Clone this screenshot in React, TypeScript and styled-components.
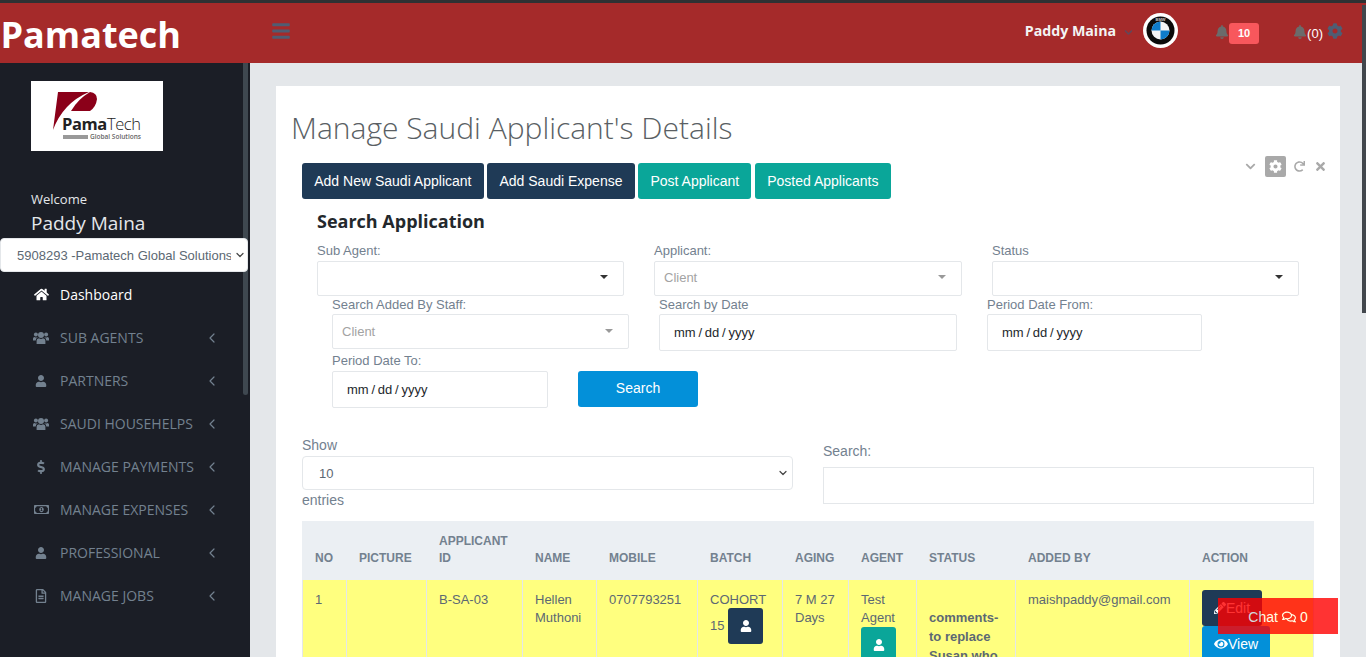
import React from 'react';
import styled, { createGlobalStyle } from 'styled-components';
import {
  FaBars,
  FaBell,
  FaChevronDown,
  FaCog,
  FaDollarSign,
  FaEye,
  FaHome,
  FaPencilAlt,
  FaRedo,
  FaRegComments,
  FaRegFileAlt,
  FaRegMoneyBillAlt,
  FaTimes,
  FaUser,
} from 'react-icons/fa';
import { ChevronDown, ChevronLeft } from 'lucide-react';

const GlobalStyle = createGlobalStyle`
  html, body {
    margin: 0;
    height: 100%;
    overflow: hidden;
  }
  body {
    font-family: "Liberation Sans", Arial, sans-serif;
    font-size: 13px;
    color: #73818f;
    background: #e4e7ea;
  }
  * {
    box-sizing: border-box;
  }
`;

const Page = styled.div`
  display: flex;
  flex-direction: column;
  height: 100vh;
  overflow: hidden;
  border-top: 3px solid #2f3133;
`;

const Header = styled.header`
  flex: none;
  height: 60px;
  display: flex;
  align-items: center;
  background: #a52a2a;
  padding-right: 23px;
`;

const Brand = styled.div`
  width: 250px;
  height: 60px;
  padding-left: 0.5px;
  font-family: "Open Sans", sans-serif;
  font-weight: 700;
  font-size: 36px;
  line-height: 64px;
  color: #fff;
`;

const MenuToggle = styled.div`
  display: flex;
  margin: 0 0 4px 21px;
  color: #4f5d73;
  font-size: 20px;
`;

const HeaderRight = styled.div`
  display: flex;
  align-items: center;
  margin-left: auto;
`;

const UserName = styled.span`
  margin-bottom: 5px;
  font-family: "Open Sans", sans-serif;
  font-weight: 700;
  font-size: 14.2px;
  color: #f3f3f3;
`;

const UserCaret = styled.span`
  display: flex;
  margin: 0 10px 2px 8px;
  color: #5f4a5c;
  font-size: 9px;
`;

const Avatar = styled.span`
  display: flex;
  margin-bottom: 5px;
`;

const Bell = styled.span<{ $gap: number }>`
  display: flex;
  margin: 0 0 2px ${(p) => p.$gap}px;
  color: #6b6b6b;
  font-size: 14px;
`;

const Badge = styled.span`
  width: 30px;
  height: 21px;
  margin-top: 1px;
  border-radius: 3px;
  background: #f8575c;
  color: #fff;
  font-size: 11px;
  font-weight: 700;
  line-height: 21px;
  text-align: center;
`;

const ZeroCount = styled.span`
  margin-right: 4px;
  font-size: 13px;
  color: #fff;
`;

const HeaderGear = styled.span`
  display: flex;
  margin-bottom: 4px;
  color: #4f5d73;
  font-size: 16px;
`;

const Body = styled.div`
  flex: 1;
  display: flex;
  min-height: 0;
`;

const Sidebar = styled.aside`
  position: relative;
  flex: 0 0 250px;
  background: #1b1e26;
  font-family: "Open Sans", sans-serif;
`;

const SideThumb = styled.div`
  position: absolute;
  top: 0;
  right: 2px;
  width: 5px;
  height: 332px;
  border-radius: 0 0 3px 3px;
  background: #3f4850;
`;

const LogoBox = styled.div`
  width: 132px;
  height: 70px;
  margin: 18px 0 0 31px;
  background: #fff;
`;

const Welcome = styled.div`
  margin: 39px 0 0 31px;
  font-size: 13px;
  line-height: 18px;
  color: #e4e7ea;
`;

const SideUser = styled.div`
  margin: 2px 0 0 31px;
  font-size: 19px;
  line-height: 26px;
  color: #e4e7ea;
`;

const SelectWrap = styled.div<{ $width: string }>`
  position: relative;
  width: ${(p) => p.$width};
`;

const SelectCaret = styled.span<{ $right: number }>`
  position: absolute;
  top: 50%;
  right: ${(p) => p.$right}px;
  display: flex;
  transform: translateY(-50%);
  color: #444;
  pointer-events: none;
`;

const CompanySelect = styled.select`
  display: block;
  appearance: none;
  width: 100%;
  height: 34px;
  margin-top: 2px;
  padding: 0 16px 0 16px;
  border: 1px solid #e4e7ea;
  border-radius: 4px;
  background: #fff;
  font-family: "Liberation Sans", Arial, sans-serif;
  font-size: 13px;
  color: #5c6873;
`;

const Menu = styled.nav`
  display: flex;
  flex-direction: column;
  margin-top: 1px;
`;

const MenuItem = styled.div<{ $active?: boolean }>`
  display: flex;
  align-items: center;
  height: 43px;
  padding-left: 33px;
  font-size: 14px;
  color: ${(p) => (p.$active ? '#fff' : '#73818f')};
`;

const MenuIcon = styled.span<{ $size?: number }>`
  display: flex;
  justify-content: center;
  width: 16px;
  margin-right: 11px;
  font-size: ${(p) => p.$size ?? 15}px;
`;

const MenuLabel = styled.span`
  flex: 1;
  white-space: nowrap;
`;

const MenuArrow = styled.span`
  display: flex;
  margin-right: 30px;
`;

const Main = styled.main`
  position: relative;
  flex: 1;
  min-width: 0;
  padding: 23px 26px 0;
  overflow: hidden;
`;

const PageThumb = styled.div`
  position: fixed;
  top: 5px;
  right: 0;
  width: 4px;
  height: 308px;
  background: #42474d;
`;

const Card = styled.section`
  background: #fff;
  padding: 24px 26px 40px 15px;
`;

const Title = styled.h1`
  margin: 0 0 17px;
  font-family: "Open Sans", sans-serif;
  font-weight: 300;
  font-size: 30px;
  line-height: 36px;
  color: #5a5f64;
`;

const Inner = styled.div`
  padding-left: 11px;
`;

const ActionRow = styled.div`
  display: flex;
  align-items: flex-start;
  gap: 3.5px;
`;

const Btn = styled.button<{ $tone: 'navy' | 'teal' | 'blue' }>`
  height: 36px;
  padding: 0 12.25px;
  border: 0;
  border-radius: 3px;
  background: ${(p) =>
    p.$tone === 'navy' ? '#1f3a56' : p.$tone === 'teal' ? '#0aa699' : '#0390d9'};
  color: #fff;
  font-family: "Liberation Sans", Arial, sans-serif;
  font-size: 14px;
  white-space: nowrap;
`;

const Tools = styled.div`
  display: flex;
  align-items: center;
  margin: -7px -13px 0 auto;
  color: #a9a9a9;
  font-size: 11px;
`;

const ToolGear = styled.span`
  display: flex;
  align-items: center;
  justify-content: center;
  width: 21px;
  height: 21px;
  margin: 0 8px 0 9px;
  border-radius: 2px;
  background: #a9a9a9;
  color: #fff;
  font-size: 13px;
`;

const ToolIcon = styled.span<{ $size?: number }>`
  display: flex;
  margin-right: 9px;
  font-size: ${(p) => p.$size ?? 11}px;
  &:last-child {
    margin-right: 0;
  }
`;

const SearchTitle = styled.h2`
  margin: 10px 0 9px 15px;
  font-family: "Open Sans", sans-serif;
  font-weight: 700;
  font-size: 18px;
  line-height: 24px;
  color: #23282c;
`;

const RowOne = styled.div`
  display: grid;
  grid-template-columns: 307px 308px 307px;
  gap: 30px;
  margin-left: 15px;
`;

const RowTwo = styled.div`
  display: grid;
  grid-template-columns: 297px 298px 215px;
  gap: 30px;
  margin-left: 30px;
`;

const RowThree = styled.div`
  display: flex;
  align-items: flex-start;
  gap: 30px;
  margin: 1px 0 0 30px;
`;

const Field = styled.div``;

const Label = styled.label<{ $gap: number }>`
  display: block;
  height: 16px;
  margin: 1px 0 ${(p) => p.$gap}px;
  font-size: 13px;
  line-height: 16px;
  color: #73818f;
`;

const PickBox = styled.div<{ $lift?: boolean }>`
  display: flex;
  align-items: center;
  justify-content: space-between;
  height: 35px;
  padding: 0 15px ${(p) => (p.$lift ? 2 : 0)}px 9px;
  border: 1px solid #e4e7ea;
  border-radius: 2px;
  color: #a3a3a3;
  font-size: 13px;
`;

const PickCaret = styled.span<{ $muted?: boolean }>`
  width: 0;
  height: 0;
  margin-top: -2px;
  border-left: 4px solid transparent;
  border-right: 4px solid transparent;
  border-top: 4px solid ${(p) => (p.$muted ? '#999' : '#333')};
`;

const DateInput = styled.input<{ $width?: number }>`
  display: block;
  width: ${(p) => (p.$width ? `${p.$width}px` : '100%')};
  height: 37px;
  padding: 0 13px;
  border: 1px solid #e4e7ea;
  border-radius: 2px;
  background: #fff;
  font-family: "Liberation Sans", Arial, sans-serif;
  font-size: 13px;
  color: #23282c;
  &::-webkit-calendar-picker-indicator {
    display: none;
  }
  &::-webkit-datetime-edit-text {
    padding: 0 1.75px;
  }
`;

const SearchBtn = styled(Btn)`
  width: 120px;
  margin-top: 19px;
  padding-bottom: 2px;
`;

const TableTools = styled.div`
  display: flex;
  gap: 30px;
  margin-top: 29px;
`;

const LengthBox = styled.div`
  width: 491px;
`;

const LengthSelect = styled.select`
  display: block;
  appearance: none;
  width: 100%;
  height: 34px;
  padding: 0 16px;
  border: 1px solid #e4e7ea;
  border-radius: 4px;
  background: #fff;
  font-family: "Liberation Sans", Arial, sans-serif;
  font-size: 13px;
  color: #5c6873;
`;

const Entries = styled.div`
  margin-top: 2px;
  font-size: 14px;
  line-height: 16px;
`;

const FilterBox = styled.div`
  flex: 1;
  padding-top: 6px;
`;

const ToolLabel = styled.div<{ $gap: number }>`
  margin-bottom: ${(p) => p.$gap}px;
  font-size: 14px;
  line-height: 16px;
`;

const FilterInput = styled.input`
  display: block;
  width: 100%;
  height: 37px;
  border: 1px solid #e4e7ea;
  background: #fff;
`;

const Table = styled.table`
  width: 1011px;
  margin-top: 13px;
  table-layout: fixed;
  border-collapse: collapse;
`;

const Th = styled.th`
  padding: 11px 11px 12px 12px;
  background: #ebeff3;
  border: 1px solid #ebeff3;
  font-size: 12px;
  font-weight: 700;
  line-height: 17px;
  text-align: left;
  vertical-align: bottom;
  color: #73818f;
`;

const Td = styled.td`
  padding: 11px 11px 0 12px;
  height: 90px;
  background: #ffff7f;
  border: 1px solid #e4e7ea;
  font-size: 13px;
  line-height: 18px;
  vertical-align: top;
  color: #5c6873;
`;

const StatusText = styled.strong`
  display: block;
  margin-top: 17px;
  line-height: 19px;
`;

const IconBtn = styled.span<{ $tone: 'navy' | 'teal' }>`
  display: inline-flex;
  align-items: center;
  justify-content: center;
  width: 35px;
  height: 36px;
  margin-top: ${(p) => (p.$tone === 'navy' ? -1 : 0)}px;
  vertical-align: middle;
  border-radius: 3px;
  background: ${(p) => (p.$tone === 'navy' ? '#1f3a56' : '#0aa699')};
  color: #fff;
  font-size: 12px;
`;

const RowActions = styled.div`
  margin-top: -1px;
`;

const RowAction = styled.span<{ $tone: 'navy' | 'blue' }>`
  display: flex;
  align-items: center;
  width: fit-content;
  height: 36px;
  padding: 0 12px;
  border-radius: 3px;
  background: ${(p) => (p.$tone === 'navy' ? '#1f3a56' : '#0390d9')};
  color: #fff;
  font-size: 14px;
`;

const ChatWidget = styled.div`
  position: fixed;
  right: 28px;
  bottom: 23px;
  display: flex;
  align-items: center;
  justify-content: center;
  gap: 4px;
  width: 120px;
  height: 36px;
  padding-top: 1px;
  background: #f00;
  opacity: 0.8;
  color: #fff;
  font-size: 14px;
`;

const columns = [44, 80, 96, 74, 101, 85, 66, 68, 99, 174, 124];

const UsersIcon = () => (
  <svg width="16" height="14" viewBox="0 0 16 14" fill="currentColor">
    <circle cx="8" cy="4" r="3" />
    <path d="M3.6 13 V9.6 Q3.6 7.4 6 7.2 Q8 8.6 10 7.2 Q12.4 7.4 12.4 9.6 V13 Z" />
    <circle cx="2.9" cy="3.4" r="2" />
    <circle cx="13.1" cy="3.4" r="2" />
    <path d="M0 9.4 V7.6 Q0 6 1.6 5.9 Q2.9 6.8 4.3 6.2 Q4.6 6.4 4.8 6.6 Q2.8 7.3 2.7 9.4 Z" />
    <path d="M16 9.4 V7.6 Q16 6 14.4 5.9 Q13.1 6.8 11.7 6.2 Q11.4 6.4 11.2 6.6 Q13.2 7.3 13.3 9.4 Z" />
  </svg>
);

const menu = [
  { label: 'SUB AGENTS', icon: <UsersIcon />, size: 15 },
  { label: 'PARTNERS', icon: <FaUser />, size: 12 },
  { label: 'SAUDI HOUSEHELPS', icon: <UsersIcon />, size: 15 },
  { label: 'MANAGE PAYMENTS', icon: <FaDollarSign />, size: 14 },
  { label: 'MANAGE EXPENSES', icon: <FaRegMoneyBillAlt />, size: 15 },
  { label: 'PROFESSIONAL', icon: <FaUser />, size: 12 },
  { label: 'MANAGE JOBS', icon: <FaRegFileAlt />, size: 14 },
];

const Logo = () => (
  <svg width="132" height="70" viewBox="0 0 132 70">
    <path d="M27 11 L58 11 Q32 22 22 49 Z" fill="#8b0019" />
    <path d="M59 11 Q66 12 66 18 Q65 26 59 30 L40 30 Q47 18 59 11 Z" fill="#8b0019" />
    <text x="31" y="49" textLength="79" fontFamily="Open Sans, sans-serif" fontSize="16.5" fontWeight="700" fill="#222">
      Pama
      <tspan fontWeight="300">Tech</tspan>
    </text>
    <rect x="32" y="54" width="25" height="4" fill="#999" />
    <text x="59" y="58" textLength="51" fontFamily="Open Sans, sans-serif" fontSize="6.5" fontWeight="600" fill="#666">
      Global Solutions
    </text>
  </svg>
);

const BmwAvatar = () => (
  <svg width="35" height="35" viewBox="0 0 35 35">
    <circle cx="17.5" cy="17.5" r="17.5" fill="#fff" />
    <circle cx="17.5" cy="17.5" r="14" fill="#0b0b0b" />
    <circle cx="17.5" cy="17.5" r="9" fill="#f4f4f4" />
    <path d="M17.5 17.5 V8.5 A9 9 0 0 0 8.5 17.5 Z" fill="#0f7ccb" />
    <path d="M17.5 17.5 V26.5 A9 9 0 0 0 26.5 17.5 Z" fill="#0f7ccb" />
    <text x="17.5" y="7.6" textAnchor="middle" fontFamily="Liberation Sans, sans-serif" fontSize="4" fontWeight="700" fill="#ccc">
      BMW
    </text>
  </svg>
);

const App = () => {
  return (
    <Page>
      <GlobalStyle />
      <Header>
        <Brand>Pamatech</Brand>
        <MenuToggle>
          <FaBars />
        </MenuToggle>
        <HeaderRight>
          <UserName>Paddy Maina</UserName>
          <UserCaret>
            <FaChevronDown />
          </UserCaret>
          <Avatar>
            <BmwAvatar />
          </Avatar>
          <Bell $gap={37}>
            <FaBell />
          </Bell>
          <Badge>10</Badge>
          <Bell $gap={34}>
            <FaBell />
          </Bell>
          <ZeroCount>(0)</ZeroCount>
          <HeaderGear>
            <FaCog />
          </HeaderGear>
        </HeaderRight>
      </Header>
      <Body>
        <Sidebar>
          <SideThumb />
          <LogoBox>
            <Logo />
          </LogoBox>
          <Welcome>Welcome</Welcome>
          <SideUser>Paddy Maina</SideUser>
          <SelectWrap $width="248px">
            <CompanySelect defaultValue="5908293">
              <option value="5908293">5908293 -Pamatech Global Solutions</option>
            </CompanySelect>
            <SelectCaret $right={2}>
              <ChevronDown size={12} strokeWidth={2.4} />
            </SelectCaret>
          </SelectWrap>
          <Menu>
            <MenuItem $active>
              <MenuIcon>
                <FaHome />
              </MenuIcon>
              <MenuLabel>Dashboard</MenuLabel>
            </MenuItem>
            {menu.map((item) => (
              <MenuItem key={item.label}>
                <MenuIcon $size={item.size}>{item.icon}</MenuIcon>
                <MenuLabel>{item.label}</MenuLabel>
                <MenuArrow>
                  <ChevronLeft size={16} strokeWidth={1.8} />
                </MenuArrow>
              </MenuItem>
            ))}
          </Menu>
        </Sidebar>
        <Main>
          <Card>
            <Title>Manage Saudi Applicant's Details</Title>
            <Inner>
              <ActionRow>
                <Btn $tone="navy">Add New Saudi Applicant</Btn>
                <Btn $tone="navy">Add Saudi Expense</Btn>
                <Btn $tone="teal">Post Applicant</Btn>
                <Btn $tone="teal">Posted Applicants</Btn>
                <Tools>
                  <FaChevronDown />
                  <ToolGear>
                    <FaCog />
                  </ToolGear>
                  <ToolIcon>
                    <FaRedo />
                  </ToolIcon>
                  <ToolIcon $size={13}>
                    <FaTimes />
                  </ToolIcon>
                </Tools>
              </ActionRow>
              <SearchTitle>Search Application</SearchTitle>
              <RowOne>
                <Field>
                  <Label $gap={2}>Sub Agent:</Label>
                  <PickBox $lift>
                    <span />
                    <PickCaret />
                  </PickBox>
                </Field>
                <Field>
                  <Label $gap={2}>Applicant:</Label>
                  <PickBox $lift>
                    Client
                    <PickCaret $muted />
                  </PickBox>
                </Field>
                <Field>
                  <Label $gap={2}>Status</Label>
                  <PickBox $lift>
                    <span />
                    <PickCaret />
                  </PickBox>
                </Field>
              </RowOne>
              <RowTwo>
                <Field>
                  <Label $gap={1}>Search Added By Staff:</Label>
                  <PickBox>
                    Client
                    <PickCaret $muted />
                  </PickBox>
                </Field>
                <Field>
                  <Label $gap={1}>Search by Date</Label>
                  <DateInput type="date" />
                </Field>
                <Field>
                  <Label $gap={1}>Period Date From:</Label>
                  <DateInput type="date" />
                </Field>
              </RowTwo>
              <RowThree>
                <Field>
                  <Label $gap={2}>Period Date To:</Label>
                  <DateInput type="date" $width={216} />
                </Field>
                <SearchBtn $tone="blue">Search</SearchBtn>
              </RowThree>
              <TableTools>
                <LengthBox>
                  <ToolLabel $gap={3}>Show</ToolLabel>
                  <SelectWrap $width="100%">
                    <LengthSelect defaultValue="10">
                      <option value="10">10</option>
                    </LengthSelect>
                    <SelectCaret $right={4}>
                      <ChevronDown size={12} strokeWidth={2.4} />
                    </SelectCaret>
                  </SelectWrap>
                  <Entries>entries</Entries>
                </LengthBox>
                <FilterBox>
                  <ToolLabel $gap={8}>Search:</ToolLabel>
                  <FilterInput />
                </FilterBox>
              </TableTools>
              <Table>
                <colgroup>
                  {columns.map((w, i) => (
                    <col key={i} width={w} />
                  ))}
                </colgroup>
                <thead>
                  <tr>
                    <Th>NO</Th>
                    <Th>PICTURE</Th>
                    <Th>APPLICANT ID</Th>
                    <Th>NAME</Th>
                    <Th>MOBILE</Th>
                    <Th>BATCH</Th>
                    <Th>AGING</Th>
                    <Th>AGENT</Th>
                    <Th>STATUS</Th>
                    <Th>ADDED BY</Th>
                    <Th>ACTION</Th>
                  </tr>
                </thead>
                <tbody>
                  <tr>
                    <Td>1</Td>
                    <Td />
                    <Td>B-SA-03</Td>
                    <Td>Hellen Muthoni</Td>
                    <Td>0707793251</Td>
                    <Td>
                      COHORT 15{' '}
                      <IconBtn $tone="navy">
                        <FaUser />
                      </IconBtn>
                    </Td>
                    <Td>7 M 27 Days</Td>
                    <Td>
                      Test Agent{' '}
                      <IconBtn $tone="teal">
                        <FaUser />
                      </IconBtn>
                    </Td>
                    <Td>
                      <StatusText>comments-to replace Susan who</StatusText>
                    </Td>
                    <Td>maishpaddy@gmail.com</Td>
                    <Td>
                      <RowActions>
                        <RowAction $tone="navy">
                          <FaPencilAlt size={12} />
                          Edit
                        </RowAction>
                        <RowAction $tone="blue">
                          <FaEye size={14} />
                          View
                        </RowAction>
                      </RowActions>
                    </Td>
                  </tr>
                </tbody>
              </Table>
            </Inner>
          </Card>
          <PageThumb />
        </Main>
      </Body>
      <ChatWidget>
        Chat <FaRegComments /> 0
      </ChatWidget>
    </Page>
  );
};

export default App;
